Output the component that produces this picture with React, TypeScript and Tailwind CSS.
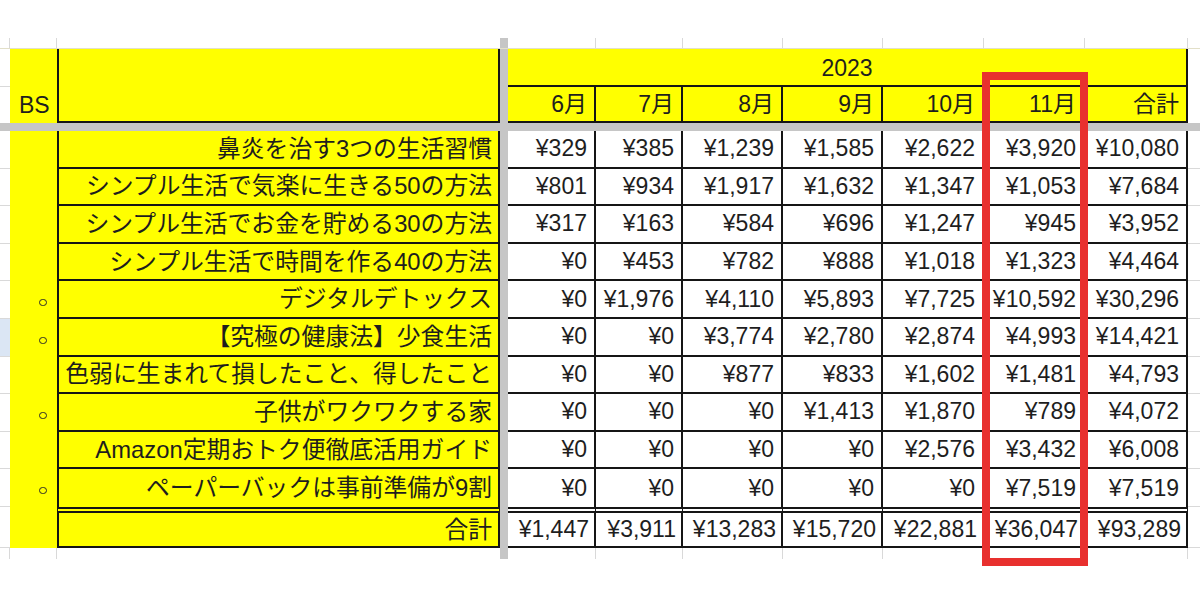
const colW = ["w-[88px]", "w-[87px]", "w-[100px]", "w-[100px]", "w-[101px]", "w-[101px]", "w-[103px]"];
const months = ["6月", "7月", "8月", "9月", "10月", "11月", "合計"];

const rows = [
  { bs: false, title: "鼻炎を治す3つの生活習慣", v: ["¥329", "¥385", "¥1,239", "¥1,585", "¥2,622", "¥3,920", "¥10,080"] },
  { bs: false, title: "シンプル生活で気楽に生きる50の方法", v: ["¥801", "¥934", "¥1,917", "¥1,632", "¥1,347", "¥1,053", "¥7,684"] },
  { bs: false, title: "シンプル生活でお金を貯める30の方法", v: ["¥317", "¥163", "¥584", "¥696", "¥1,247", "¥945", "¥3,952"] },
  { bs: false, title: "シンプル生活で時間を作る40の方法", v: ["¥0", "¥453", "¥782", "¥888", "¥1,018", "¥1,323", "¥4,464"] },
  { bs: true, title: "デジタルデトックス", v: ["¥0", "¥1,976", "¥4,110", "¥5,893", "¥7,725", "¥10,592", "¥30,296"] },
  { bs: true, title: "【究極の健康法】少食生活", v: ["¥0", "¥0", "¥3,774", "¥2,780", "¥2,874", "¥4,993", "¥14,421"] },
  { bs: false, title: "色弱に生まれて損したこと、得したこと", v: ["¥0", "¥0", "¥877", "¥833", "¥1,602", "¥1,481", "¥4,793"] },
  { bs: true, title: "子供がワクワクする家", v: ["¥0", "¥0", "¥0", "¥1,413", "¥1,870", "¥789", "¥4,072"] },
  { bs: false, title: "Amazon定期おトク便徹底活用ガイド", v: ["¥0", "¥0", "¥0", "¥0", "¥2,576", "¥3,432", "¥6,008"] },
  { bs: true, title: "ペーパーバックは事前準備が9割", v: ["¥0", "¥0", "¥0", "¥0", "¥0", "¥7,519", "¥7,519"] },
];
const totals = ["¥1,447", "¥3,911", "¥13,283", "¥15,720", "¥22,881", "¥36,047", "¥93,289"];

// faint spreadsheet grid stubs above / below the table
function GridStub({ top }: { top: boolean }) {
  return (
    <div className={`flex h-[11px] ${top ? "border-b border-[#e2dfc8]" : ""}`}>
      <div className="w-[10px] border-r border-[#d9d9d9]" />
      <div className="w-[47px] border-r border-[#d9d9d9]" />
      <div className="w-[443px]" />
      <div className="w-[8px] bg-[#c6c6c6]" />
      {colW.map((w, i) => (
        <div key={i} className={`${w} border-r border-[#d9d9d9]`} />
      ))}
      <div className="w-[12px]" />
    </div>
  );
}

export default function App() {
  return (
    <div className="relative w-[1200px] h-[600px] overflow-hidden bg-white text-[#1e1e1e] font-['Liberation_Sans','Noto_Sans_CJK_JP',sans-serif]">
      <div className="h-[38px]" />
      <GridStub top />

      {/* header */}
      <div className="flex h-[74px]">
        <div className="w-[10px] flex flex-col">
          <div className="h-[38px] border-b border-[#d9d9d9]" />
          <div className="flex-1" />
        </div>
        <div className="w-[47px] bg-[#ffff00] flex items-end pl-[9px] pb-[6px] text-[23px] leading-none">BS</div>
        <div className="w-[443px] bg-[#ffff00] border-l-2 border-r-2 border-b-2 border-[#151515]" />
        <div className="w-[8px] bg-[#c6c6c6]" />
        <div className="flex flex-col w-[680px]">
          <div className="h-[38px] bg-[#ffff00] border-r-2 border-b-2 border-[#151515] flex items-center justify-center text-[23px] leading-none pt-[2px]">
            2023
          </div>
          <div className="flex flex-1">
            {months.map((m, i) => (
              <div
                key={m}
                className={`${colW[i]} bg-[#ffff00] border-r-2 border-b-2 border-[#151515] flex items-center justify-end pr-[7px] text-[23px] leading-none`}
              >
                {m}
              </div>
            ))}
          </div>
        </div>
        <div className="w-[12px]" />
      </div>

      {/* frozen pane line */}
      <div className="h-[8px] bg-[#c6c6c6]" />

      {/* data rows */}
      {rows.map((r, ri) => {
        const last = ri === rows.length - 1;
        const bb = last ? "" : "border-b-2";
        return (
          <div key={ri} className="flex h-[37.6px]">
            <div className={`w-[10px] border-b border-[#d9d9d9] ${ri === 5 ? "bg-[#dbe6f4]" : ""}`} />
            <div className="w-[47px] bg-[#ffff00] flex items-center justify-end pr-[10px] pt-[5px]">
              {r.bs && <span className="w-[8px] h-[7px] rounded-full border-[1.5px] border-[#2a2a2a]" />}
            </div>
            <div
              className={`w-[443px] bg-[#ffff00] border-l-2 border-r-2 ${bb} border-[#151515] flex items-center justify-end pr-[6px] text-[23.8px] leading-none whitespace-nowrap`}
            >
              {r.title}
            </div>
            <div className="w-[8px] bg-[#c6c6c6]" />
            {r.v.map((v, i) => (
              <div
                key={i}
                className={`${colW[i]} bg-white border-r-2 ${bb} border-[#151515] flex items-center justify-end pr-[7px] text-[23px] leading-none`}
              >
                {v}
              </div>
            ))}
            <div className="w-[12px] border-b border-[#d9d9d9]" />
          </div>
        );
      })}

      {/* totals */}
      <div className="flex h-[41px]">
        <div className="w-[10px] border-b border-[#d9d9d9]" />
        <div className="w-[47px] bg-[#ffff00]" />
        <div className="w-[443px] bg-[#ffff00] border-double border-t-[6px] border-l-2 border-r-2 border-b-2 border-[#151515] flex items-center justify-end pr-[6px] text-[23.8px] leading-none">
          合計
        </div>
        <div className="w-[8px] bg-[#c6c6c6]" />
        {totals.map((v, i) => (
          <div
            key={i}
            className={`${colW[i]} bg-white border-double border-t-[6px] border-r-2 border-b-2 border-[#151515] flex items-center justify-end pr-[5px] text-[23px] leading-none`}
          >
            {v}
          </div>
        ))}
        <div className="w-[12px] border-b border-[#d9d9d9]" />
      </div>
      <GridStub top={false} />

      {/* highlight around November */}
      <div className="absolute left-[982px] top-[72px] w-[106px] h-[494px] border-[8px] border-[#e8302e]" />
    </div>
  );
}
